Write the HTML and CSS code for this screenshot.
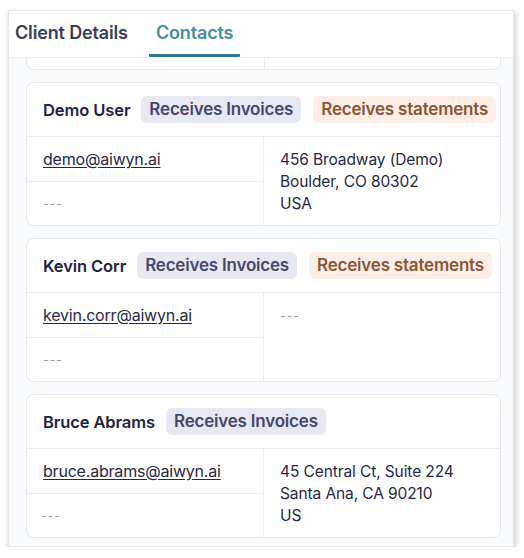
FILE: index.html
```html
<!DOCTYPE html>
<html>
<head>
<meta charset="utf-8">
<link rel="stylesheet" href="styles.css">
</head>
<body>
<div class="panel">
  <div class="tabs">
    <div class="tab">Client Details</div>
    <div class="tab active">Contacts</div>
  </div>
  <div class="content">
    <div class="card cut">
      <div class="cell"></div>
      <div class="cell right"></div>
    </div>

    <div class="card">
      <div class="card-head">
        <span class="name">Demo User</span>
        <span class="badge inv">Receives Invoices</span>
        <span class="badge stm">Receives statements</span>
      </div>
      <div class="card-body">
        <div class="left">
          <div class="row"><a class="email" href="#">demo@aiwyn.ai</a></div>
          <div class="row"><span class="empty">---</span></div>
        </div>
        <div class="addr">456 Broadway (Demo)<br>Boulder, CO 80302<br>USA</div>
      </div>
    </div>

    <div class="card">
      <div class="card-head">
        <span class="name">Kevin Corr</span>
        <span class="badge inv">Receives Invoices</span>
        <span class="badge stm">Receives statements</span>
      </div>
      <div class="card-body">
        <div class="left">
          <div class="row"><a class="email" href="#">kevin.corr@aiwyn.ai</a></div>
          <div class="row"><span class="empty">---</span></div>
        </div>
        <div class="addr"><span class="empty">---</span></div>
      </div>
    </div>

    <div class="card">
      <div class="card-head">
        <span class="name">Bruce Abrams</span>
        <span class="badge inv">Receives Invoices</span>
      </div>
      <div class="card-body">
        <div class="left">
          <div class="row"><a class="email" href="#">bruce.abrams@aiwyn.ai</a></div>
          <div class="row"><span class="empty shift">---</span></div>
        </div>
        <div class="addr">45 Central Ct, Suite 224<br>Santa Ana, CA 90210<br>US</div>
      </div>
    </div>
  </div>
</div>
</body>
</html>
```

FILE: styles.css
```css
* { box-sizing: border-box; }
html, body { margin: 0; padding: 0; background: #ffffff; }
body {
  font-family: Inter, "Noto Sans", sans-serif;
  color: #23263f;
}
.panel {
  margin: 10px 0 0 8px;
  width: 506px;
  height: 537px;
  border: 1px solid #e4e6e8;
  box-shadow: 1px 3px 6px rgba(0, 0, 0, 0.22);
  background: #ffffff;
  display: flex;
  flex-direction: column;
  overflow: hidden;
}
.tabs {
  flex: 0 0 47px;
  display: flex;
  align-items: stretch;
  gap: 15px;
  border-bottom: 1px solid #eceef0;
}
.tab {
  padding: 0 6px 4px;
  display: flex;
  align-items: center;
  font-size: 18px;
  font-weight: 600;
  color: #3a3e52;
  letter-spacing: -0.15px;
}
.tab.active {
  color: #4a8d9e;
  border-bottom: 3px solid #2f7b8a;
  padding: 0 7px 1px;
  border-radius: 0 0 1px 1px;
}
.content {
  flex: 1;
  background: #f9fafb;
  padding: 0 12px 0 17px;
  display: flex;
  flex-direction: column;
  gap: 12px;
  overflow: hidden;
}
.card {
  background: #ffffff;
  border: 1px solid #e6e8eb;
  border-radius: 8px;
}
.card.cut {
  height: 12px;
  flex: 0 0 12px;
  border-top: none;
  border-radius: 0 0 8px 8px;
  display: grid;
  grid-template-columns: 237px 1fr;
}
.card.cut .right { border-left: 1px solid #eceef0; }
.card-head {
  height: 54px;
  display: flex;
  align-items: center;
  padding: 0 16px;
  gap: 11px;
  border-bottom: 1px solid #eceef0;
  white-space: nowrap;
}
.card-head .badge + .badge { margin-left: 1px; }
.name {
  font-size: 16.5px;
  font-weight: 600;
  color: #1f2340;
  letter-spacing: -0.1px;
}
.badge {
  font-size: 17px;
  font-weight: 600;
  padding: 0 8px;
  height: 27px;
  line-height: 27px;
  border-radius: 6px;
  letter-spacing: -0.2px;
}
.badge.inv { background: #e8e8f3; color: #46476b; }
.badge.stm { background: #fdeee8; color: #8a5634; }
.card-body {
  display: grid;
  grid-template-columns: 237px 1fr;
}
.left { border-right: 1px solid #eceef0; }
.row {
  height: 44px;
  display: flex;
  align-items: center;
  padding: 0 16px;
}
.row + .row { border-top: 1px solid #eceef0; }
.email {
  font-size: 16px;
  color: #262943;
  text-decoration: underline;
  text-underline-offset: 2px;
  letter-spacing: -0.2px;
}
.empty {
  font-size: 13px;
  color: #a2a6ad;
  letter-spacing: 0.5px;
}
.empty.shift { margin-left: -2px; }
.addr {
  padding: 12px 16px 0 16px;
  font-size: 15.5px;
  line-height: 22px;
  color: #262943;
  letter-spacing: -0.1px;
}
.addr .empty { display: inline-block; }
```
